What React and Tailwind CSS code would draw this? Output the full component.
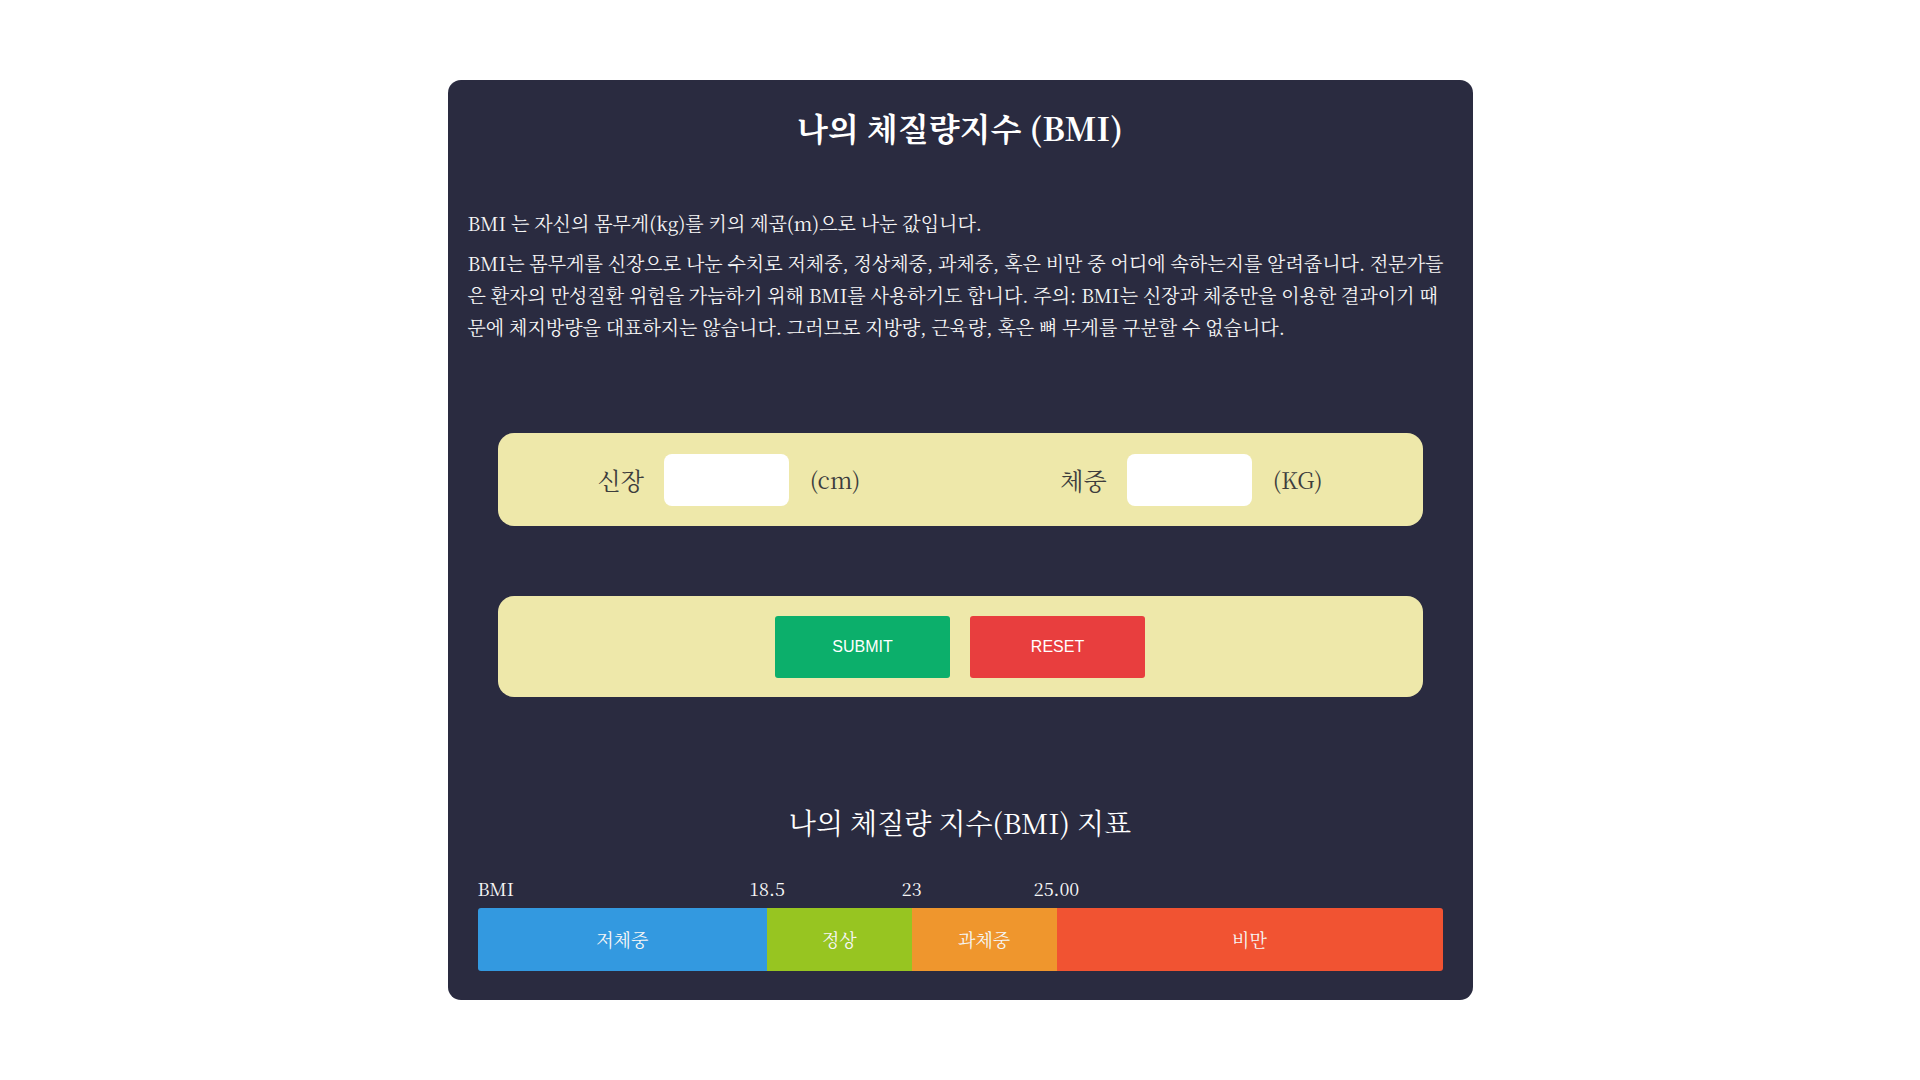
import { useState } from 'react';

const ranges = [
  { label: '저체중', width: '30%', color: 'bg-[#3399e0]' },
  { label: '정상', width: '15%', color: 'bg-[#97c521]' },
  { label: '과체중', width: '15%', color: 'bg-[#ef962d]' },
  { label: '비만', width: '40%', color: 'bg-[#f15332]' },
];

const ticks = [
  { text: '18.5', className: 'left-[30%] -translate-x-1/2' },
  { text: '23', className: 'left-[45%] -translate-x-1/2' },
  { text: '25.00', className: 'left-[60%] -translate-x-1/2' },
];

const serif = "font-['Noto_Serif_CJK_KR','Liberation_Serif','Noto_Sans_CJK_KR',serif]";

function MeasureField({ label, unit, value, onChange }) {
  return (
    <div className="flex items-center">
      <span className="text-[24px] leading-none text-[#3d3d3d]">{label}</span>
      <input
        value={value}
        onChange={(event) => onChange(event.target.value)}
        className="ml-5 h-[52px] w-[125px] rounded-lg bg-white px-3 text-[20px] text-[#333] outline-none"
      />
      <span className="ml-[21px] text-[23px] leading-none text-[#3d3d3d]">{unit}</span>
    </div>
  );
}

export default function App() {
  const [height, setHeight] = useState('');
  const [weight, setWeight] = useState('');

  const reset = () => {
    setHeight('');
    setWeight('');
  };

  return (
    <div className={`min-h-screen bg-white pt-20 ${serif}`}>
      <div className="mx-auto w-[1025px] rounded-[13px] bg-[#2a2b40] px-5 pb-[29px] pt-[23px] text-[#f6f6f6]">
        <h1 className="text-center text-[32px] font-bold leading-[48px] text-white">나의 체질량지수 (BMI)</h1>

        <p className="mt-[56px] text-[19px] leading-[32px]">BMI 는 자신의 몸무게(kg)를 키의 제곱(m)으로 나눈 값입니다.</p>
        <p className="mt-2 text-[19px] leading-[32px]">
          BMI는 몸무게를 신장으로 나눈 수치로 저체중, 정상체중, 과체중, 혹은 비만 중 어디에 속하는지를 알려줍니다. 전문가들은 환자의 만성질환 위험을 가늠하기 위해 BMI를 사용하기도 합니다. 주의: BMI는 신장과 체중만을 이용한 결과이기 때문에 체지방량을 대표하지는 않습니다. 그러므로 지방량, 근육량, 혹은 뼈 무게를 구분할 수 없습니다.
        </p>

        <div className="mx-[30px] mt-[90px] flex h-[93px] items-center justify-around rounded-2xl bg-[#eee8aa]">
          <MeasureField label="신장" unit="(cm)" value={height} onChange={setHeight} />
          <MeasureField label="체중" unit="(KG)" value={weight} onChange={setWeight} />
        </div>

        <div className="mx-[30px] mt-[70px] flex h-[101px] items-center justify-center gap-5 rounded-2xl bg-[#eee8aa] font-['Liberation_Sans',sans-serif]">
          <button className="h-[62px] w-[175px] rounded-[3px] bg-[#0caf6b] text-[16px] text-white">SUBMIT</button>
          <button onClick={reset} className="h-[62px] w-[175px] rounded-[3px] bg-[#e83e3e] text-[16px] text-white">RESET</button>
        </div>

        <h2 className="mt-[105px] text-center text-[28px] leading-[40px] text-white">나의 체질량 지수(BMI) 지표</h2>

        <div className="mx-[10px] mt-[34px]">
          <div className="relative h-6 text-[18px] leading-6">
            <span className="absolute left-0 top-0">BMI</span>
            {ticks.map((tick) => (
              <span key={tick.text} className={`absolute top-0 ${tick.className}`}>{tick.text}</span>
            ))}
          </div>
          <div className="mt-2 flex h-[63px] overflow-hidden rounded-[3px]">
            {ranges.map((range) => (
              <div
                key={range.label}
                style={{ width: range.width }}
                className={`flex items-center justify-center text-[18px] text-[#f6f6f6] ${range.color}`}
              >
                {range.label}
              </div>
            ))}
          </div>
        </div>
      </div>
    </div>
  );
}
